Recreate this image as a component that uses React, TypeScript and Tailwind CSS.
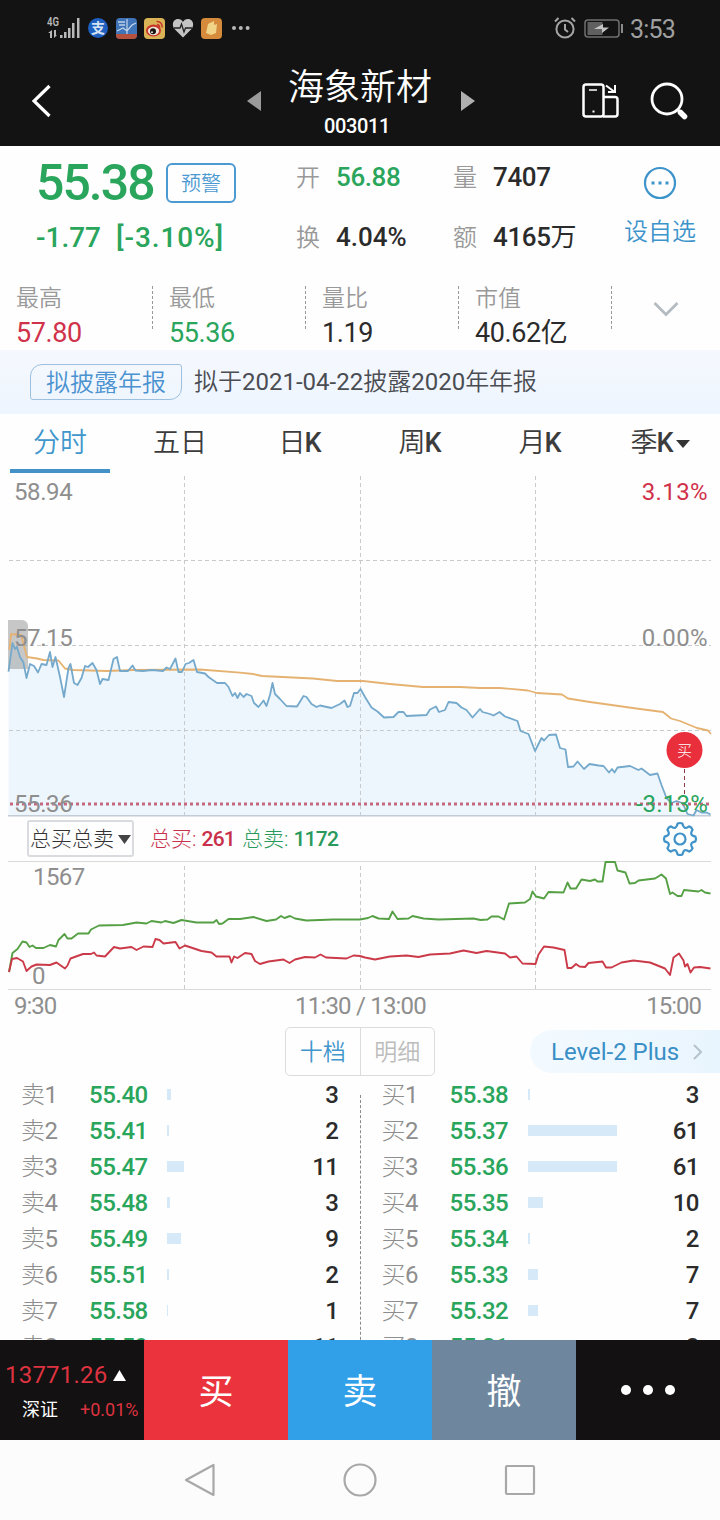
import { FC, ReactNode } from "react";
import clsx from "clsx";

//data
const stats = [
  { label: "最高", value: "57.80", color: "text-[#d0324a]" },
  { label: "最低", value: "55.36", color: "text-[#2aa55c]" },
  { label: "量比", value: "1.19", color: "text-[#2b2b2b]" },
  { label: "市值", value: "40.62亿", color: "text-[#2b2b2b]" },
];

const tabs = ["分时", "五日", "日K", "周K", "月K", "季K"];

interface Level {
  label: string;
  price: string;
  bar: number;
  amount: number;
}

const sells: Level[] = [
  { label: "卖1", price: "55.40", bar: 4, amount: 3 },
  { label: "卖2", price: "55.41", bar: 2, amount: 2 },
  { label: "卖3", price: "55.47", bar: 17, amount: 11 },
  { label: "卖4", price: "55.48", bar: 3, amount: 3 },
  { label: "卖5", price: "55.49", bar: 14, amount: 9 },
  { label: "卖6", price: "55.51", bar: 2, amount: 2 },
  { label: "卖7", price: "55.58", bar: 1, amount: 1 },
  { label: "卖8", price: "55.59", bar: 0, amount: 11 },
];

const buys: Level[] = [
  { label: "买1", price: "55.38", bar: 2, amount: 3 },
  { label: "买2", price: "55.37", bar: 89, amount: 61 },
  { label: "买3", price: "55.36", bar: 89, amount: 61 },
  { label: "买4", price: "55.35", bar: 15, amount: 10 },
  { label: "买5", price: "55.34", bar: 2, amount: 2 },
  { label: "买6", price: "55.33", bar: 10, amount: 7 },
  { label: "买7", price: "55.32", bar: 10, amount: 7 },
  { label: "买8", price: "55.31", bar: 0, amount: 2 },
];

const priceLine =
  "8.5,671.7 12.5,643 15,649 17,647 20,657 23.3,662 26.5,678 30,664 34,666 38,672.5 41.5,664 46.5,665 50,652 52.5,667 55.5,657 60,677 64,697 68.5,668 70.5,664 74,683 77.5,685 81.5,678 85,666 88,667 92.5,663 96.5,670 100,684 102.5,679 108.5,680 113.5,659 117,657 120,671 128,671 132.5,665.5 135.5,670.5 143,671 152,670 163,671 166.5,667.5 170,669 175.5,658.5 178.5,672 182,672 185.5,664 189,663 193.5,660 197,672 205,673.5 208.5,677 217,683 225,683 228.5,687 232.5,696 235,693 237.5,698 240,693 243.5,697 246.5,694 251.5,696 254,703 258.5,707 263.5,700.5 266.5,706 270,695 272.5,683 275,694 280,699 286.5,706 297,706.5 303.5,696 306.5,697 311.5,704 316.5,707 320,705.5 331.5,708 340,704 344.5,700.5 347.5,707 350,706 354,693 357.5,693 360.5,689 365,697 371.5,707.5 377.5,711.5 384,717.5 393.5,717 398.5,712 403.5,712 406.5,716 426.5,715 430,709.5 436,706.5 439,712 445,710 448.5,702 456.5,703 461.5,707.5 466.5,710 472.5,717.5 476.5,713 480,709 482.5,712 490,714 493.5,715.5 499.5,712 505,716.5 517.5,721 520.5,731 528.5,734 535,751 541.5,738 544,740.5 549,735 556,734.5 560,748 565.5,749.5 568,767 573.5,766.5 577.5,761.5 584,769 589.5,764 598.5,765.5 603.5,766 609,772.5 612,769 614.5,772.5 617.5,767.5 630,766 638.5,770 641.5,768.5 650,775 657.5,773.5 661.5,785 666.5,798 671.5,803 676.5,801 682.5,803 687.5,814 693.5,815.5 696.5,810 701.5,812.5 706.5,812.5 710.5,814.5";

const averageLine =
  "9.5,650 11,634 21,635 27,657 37,658.5 43.5,660 58.5,660.5 65,668.5 73.5,670 107,671 133,670 200,669.5 240,672.7 253,674 262,676 313,678.5 337,681 363,681 390,684 423,687 460,687 480,688 500,688 528,690.5 537,693 562,694.5 568,698.5 590,702 640,709 663,712 671,718.5 680,721 697,728 708,730.5 711,734";

const sellLine =
  "9,972 12.5,953 17.5,949 22.5,941.5 26.5,942.5 29.5,947 32.5,945.5 36,948 43.5,948 50,945 56,946.5 58.5,940 64.5,934 67.5,938.5 71.5,938.5 78,933.5 88.5,933.5 91,929.5 99,925.5 123,925 136.5,922.5 146.5,923.5 151.5,921 161.5,922.5 165,921 173.5,923 181.5,920 196.5,922.5 213.5,922.5 216.5,920 219,924 222.5,923.5 228.5,919 240,919 253.5,917 266.5,921 276,919.5 281,916 284.5,918 290,916 295,918.5 306.5,920.5 333.5,919.5 360,919.5 368,918 372.5,916 378.5,918.5 389,919 392.5,911.5 397.5,919 408.5,918.5 412.5,916 423.5,918.5 438.5,919.5 473.5,918.5 480.5,920 487.5,919.5 491.5,916.5 498.5,916.5 504,919.5 509,903.5 525,902.5 530,899 532.5,891.5 536,896.5 544,898.5 548.5,892 563.5,892.5 567.5,882.5 570.5,888.5 576,888.5 581.5,879.5 590,881 595,879.5 597.5,881.5 602.5,881.5 605.5,862 615,862 617.5,870.5 625.5,872.5 629.5,883.5 635,883 638.5,880.5 655,878.5 661.5,874.5 666,878.5 670,894 672.5,892.5 677.5,896 681.5,896 684,890 698.5,891.5 701.5,890 705,892.5 710.5,893.5";

const buyLine =
  "9,972 12,959 17,958 23,961.5 26.5,971 31.5,966.5 36.5,964.5 50,965 56.5,962.5 65,968.5 67.5,965.5 70.5,958.5 83,954 91,954 94,952.5 96.5,955.5 105,956.5 114,947 120,948.5 131.5,947 136.5,950 143.5,946.5 152.5,947 155.5,939 159.5,940 163.5,943.5 175.5,942 179.5,948.5 185,945.5 201.5,951 211.5,952.5 216.5,956.5 229.5,956.5 231.5,962.5 234,956.5 237.5,958 245,953 251.5,954 255,961 260,964 268.5,961.5 283.5,959.5 289.5,963 295,959.5 305,957 315,957.5 320.5,954.5 326,957.5 346.5,958.5 353.5,955.5 360,956 365,957.5 375,959.5 390,956.5 406.5,955.5 418.5,957 430,954.5 450,953.5 463.5,950.5 476.5,953 486.5,951 505,953.5 510,957.5 516.5,956.5 522.5,963.5 535.5,964 538.5,954.5 544,946.5 553.5,947.5 564.5,950 567.5,968 571.5,968 576,964 579.5,966.5 585,967 588.5,963 602.5,961.5 606,967.5 611.5,967.5 621.5,962.5 633.5,960.5 650,962.5 665,968.5 670,975 673.5,957.5 679,953.5 683.5,960.5 685,966.5 687.5,964 690.5,972.5 694,967.5 700,967 710.5,968.5";

// eight teeth, drawn as a wavy ring
const gearPath = Array.from({ length: 8 })
  .map((_, i) => {
    const p = (r: number, deg: number) => {
      const a = ((i * 45 + deg - 90) * Math.PI) / 180;
      return `${(18 + r * Math.cos(a)).toFixed(1)} ${(18 + r * Math.sin(a)).toFixed(1)}`;
    };
    return `${i ? "L" : "M"}${p(15.6, -9)} Q${p(16.6, 0)} ${p(15.6, 9)} L${p(13.6, 13)} Q${p(11.2, 22.5)} ${p(13.6, 32)}`;
  })
  .join(" ");

const StatusBar: FC = () => (
  <div className="flex h-14 items-center pl-[47px] pr-[45px]">
    <svg width="34" height="24" viewBox="0 0 34 24" fill="#b8b8b8">
      <text x="0" y="10" fontSize="12" fontWeight="600" textLength="12" lengthAdjust="spacingAndGlyphs">4G</text>
      <path d="M3 14v8H5v-8L1 17h2zM7 14v8l3-3H9v-5z" />
      <path d="M13 19h2.500v3H13zM17 16h2.500v6H17zM21 12h2.500v10H21zM25 7h2.500v15H25zM30 2h2.500v20H30z" />
    </svg>
    <span className="ml-[7px] flex size-5 items-center justify-center rounded-full bg-[#1e5fc0] text-[14px] font-bold text-[#d6e3f5]">支</span>
    <svg className="ml-2" width="21" height="21" viewBox="0 0 21 21">
      <rect width="21" height="21" rx="4" fill="#3f74b8" />
      <path d="M0 16h21v1a4 4 0 0 1-4 4H4a4 4 0 0 1-4-4z" fill="#b4523f" />
      <path d="M1 13l6-3 4 3 5-6 4-2M11 1v15" stroke="#c5d6ea" strokeWidth="1.2" fill="none" />
      <path d="M2 4h7M3 7h6" stroke="#9db9dc" strokeWidth="2" />
    </svg>
    <svg className="ml-[7px]" width="21" height="21" viewBox="0 0 21 21">
      <rect width="21" height="21" rx="4" fill="#d9b355" />
      <ellipse cx="9.5" cy="12.5" rx="7.5" ry="6" fill="#c8352b" />
      <ellipse cx="9.5" cy="13" rx="5.6" ry="4.2" fill="#f1e6d6" />
      <circle cx="9" cy="13.3" r="3" fill="#1b1412" />
      <circle cx="8" cy="14.2" r=".9" fill="#fff" />
      <path d="M12.500 3.500a5 5 0 0 1 5.500 6M13 6.500a2.500 2.500 0 0 1 2.500 3" stroke="#c8352b" strokeWidth="1.500" fill="none" />
    </svg>
    <svg className="ml-[7px]" width="22" height="20" viewBox="0 0 22 20">
      <path d="M11 19.500L2.500 11C-1 6.500 1.500 1 6 1c2.500 0 4 1.200 5 3 1-1.800 2.500-3 5-3 4.500 0 7 5.500 3.500 10z" fill="#c4c4c4" />
      <path d="M2 10h6l1.500-4L12 14l1.500-4H20" stroke="#222" strokeWidth="1.300" fill="none" />
    </svg>
    <svg className="ml-[7px]" width="21" height="21" viewBox="0 0 21 21">
      <rect width="21" height="21" rx="4" fill="#d58a3c" />
      <path d="M7 6l6-3v4l3-1-1 9-5 2-5-2z" fill="#f2d489" />
    </svg>
    <svg className="ml-2.5" width="18" height="4" fill="#b8b8b8">
      <circle cx="2" cy="2" r="2" />
      <circle cx="8.800" cy="2" r="2" />
      <circle cx="15.600" cy="2" r="2" />
    </svg>
    <svg className="ml-auto" width="22" height="22" viewBox="0 0 22 22" fill="none" stroke="#a5a5a5" strokeWidth="2">
      <circle cx="11" cy="12" r="8.600" />
      <path d="M11 7v5.500l3 2.500M1 4.500L4.500 1M21 4.500L17.500 1" />
    </svg>
    <svg className="ml-2" width="39" height="19" viewBox="0 0 39 19">
      <rect x="1" y="1" width="34" height="17" rx="3" fill="none" stroke="#707070" strokeWidth="1.500" />
      <rect x="3.500" y="3" width="15" height="13" fill="#606060" />
      <path d="M10 10l9-5v3.500h6L18 14v-4z" fill="#c4c4c4" />
      <path d="M38 5v9" stroke="#8a8a8a" strokeWidth="2" />
    </svg>
    <span className="ml-[7px] mt-0.5 text-[25px] leading-none tracking-[-0.8px] text-[#a0a0a0]">3:53</span>
  </div>
);

const Header: FC = () => (
  <div className="flex h-[90px] justify-between px-8">
    <svg className="mt-7 h-[34px] w-[110px]" viewBox="0 0 110 34" fill="none">
      <path d="M17.500 2L2 17l15.500 15" stroke="#fff" strokeWidth="3.200" />
    </svg>
    <div className="flex w-[228px] justify-between">
      <svg className="mt-[35px]" width="14" height="20" fill="#9a9a9a">
        <path d="M14 0v20L0 10z" />
      </svg>
      <div className="flex flex-col items-center pr-0.5 text-white">
        <h1 className="mt-3 h-10 text-[36px] font-[350] leading-10">海象新材</h1>
        <p className="mr-1.5 mt-[7px] text-[20px] font-medium leading-[22px] tracking-[-0.4px]">003011</p>
      </div>
      <svg className="mt-[35px]" width="14" height="20" fill="#b0b0b0">
        <path d="M0 0v20l14-10z" />
      </svg>
    </div>
    <div className="flex gap-[30px] pt-[26px]">
      <svg width="40" height="38" viewBox="0 0 40 38" fill="none" stroke="#fff" strokeWidth="2.500">
        <rect x="3.500" y="2.500" width="20" height="32" rx="2.500" />
        <path d="M24 15h11a2.500 2.500 0 0 1 2.500 2.500V32a2.500 2.500 0 0 1-2.500 2.500H23" />
        <path d="M9 8h8" strokeWidth="1.500" />
        <path d="M26 3.500l8 6M35 3v7h-7" strokeWidth="2" />
        <path d="M12.500 29.500h2" strokeWidth="2" />
      </svg>
      <svg width="38" height="38" viewBox="0 0 38 38" fill="none" stroke="#fff">
        <circle cx="17" cy="17" r="15" strokeWidth="2.800" />
        <path d="M28 28l2 2" strokeWidth="3" />
        <path d="M30.500 30.500l4 4" strokeWidth="5.500" strokeLinecap="round" />
      </svg>
    </div>
  </div>
);

interface PairProps {
  label: string;
  value: ReactNode;
  color?: string;
}

const Pair: FC<PairProps> = ({ label, value, color = "text-[#2b2b2b]" }) => (
  <div className="flex items-center whitespace-nowrap">
    <span className="w-10 pt-0.5 text-[24px] font-[350] text-[#999]">{label}</span>
    <span className={clsx("text-[26px] font-medium tracking-[-0.4px]", color)}>{value}</span>
  </div>
);

const Quote: FC = () => (
  <div className="h-[204px] bg-[#fefefe]">
    <div className="flex h-[130px]">
      <div className="w-[296px] pl-9 pt-2 text-[#2aa55c]">
        <div className="flex h-[58px] items-center">
          <span className="w-[130px] text-[50px] font-medium leading-none tracking-[-2px]">55.38</span>
          <button className="h-10 w-[70px] rounded-md border-2 border-[#4c9ad2] pt-0.5 text-[20px] font-[350] leading-[34px] text-[#4c9ad2]">预警</button>
        </div>
        <div className="flex h-[50px] items-center gap-[15px] pt-0.5 text-[28px] font-medium">
          <span>-1.77</span>
          <span className="tracking-[0.9px]">[-3.10%]</span>
        </div>
      </div>
      <div className="grid w-[157px] grid-rows-[58px_62px] pt-0.5">
        <Pair label="开" value="56.88" color="text-[#2aa55c]" />
        <Pair label="换" value={<span className="tracking-normal">4.04%</span>} />
      </div>
      <div className="grid w-[147px] grid-rows-[58px_62px] pt-0.5">
        <Pair label="量" value="7407" />
        <Pair
          label="额"
          value={
            <>
              4165<span className="font-normal">万</span>
            </>
          }
        />
      </div>
      <div className="flex flex-1 flex-col items-center pt-5 text-[#3d94cb]">
        <svg width="34" height="34" viewBox="0 0 34 34">
          <circle cx="17" cy="17" r="15" fill="none" stroke="currentColor" strokeWidth="2.200" />
          <path d="M8.500 15.500h3v3h-3zM15.500 15.500h3v3h-3zM22.500 15.500h3v3h-3z" fill="currentColor" />
        </svg>
        <span className="mt-[13px] text-[24px] font-[350] leading-[38px]">设自选</span>
      </div>
    </div>
    <div className="flex h-[74px]">
      {stats.map((item) => (
        <div key={item.label} className="flex w-[153px] pl-4">
          <div className="flex-1 whitespace-nowrap">
            <p className="mt-1.5 text-[23px] font-[350] leading-[34px] text-[#999]">{item.label}</p>
            <p className={clsx("text-[27px] leading-[34px] tracking-[-0.4px]", item.color)}>{item.value}</p>
          </div>
          <div className="mt-2.5 h-[43px] border-l border-dashed border-[#999]" />
        </div>
      ))}
      <svg className="ml-[41px] mt-[25px]" width="26" height="17" fill="none" stroke="#b4bcc2" strokeWidth="2.800">
        <path d="M1.500 2L13 13.500 24.500 2" />
      </svg>
    </div>
  </div>
);

const Notice: FC = () => (
  <div className="flex h-16 items-center bg-gradient-to-b from-[#f6f8fe] to-[#edf5fe] pl-[30px]">
    <span className="-mt-px h-9 w-[152px] rounded-[3px] rounded-br-[12px] rounded-tl-[12px] border border-[#9cc0de] pt-px text-center text-[24px] font-[350] leading-[34px] text-[#4b92d0]">
      拟披露年报
    </span>
    <span className="ml-3 text-[24px] text-[#4a4d52]">
      <span className="font-[350]">拟于</span>2021-04-22<span className="font-[350]">披露</span>2020<span className="font-[350]">年年报</span>
    </span>
  </div>
);

const Tabs: FC = () => (
  <div className="grid h-[59px] grid-cols-6 bg-[#fefefe] text-[27px] text-[#3c3c3c]">
    {tabs.map((tab, index) => (
      <button key={tab} className={clsx("flex flex-col items-center", index === 0 && "text-[#3f97cc]")}>
        <span className="flex h-[55px] items-center pt-1 font-[350]">
          {tab.replace("K", "")}
          {tab.endsWith("K") && <span className="-ml-px font-medium">K</span>}
          {index === 5 && (
            <svg className="ml-0.5" width="14" height="8" fill="#333">
              <path d="M0 0h14L7 8z" />
            </svg>
          )}
        </span>
        {index === 0 && <span className="h-1 w-[100px] bg-[#4393c9]" />}
      </button>
    ))}
  </div>
);

const PriceChart: FC = () => (
  <svg className="block" width="720" height="347" viewBox="0 473 720 347">
    <polygon points={`${priceLine} 710.5,815 8.5,815`} fill="#edf6fd" />
    <g stroke="#c8cbce" strokeDasharray="4 3">
      <path d="M184.500 476V815M360.500 476V815M535.500 476V815" />
      <path d="M9 560.500H711M9 645.500H711M9 730.500H711" />
    </g>
    <path d="M8 815.700H711" stroke="#c3ccd6" strokeWidth="1.500" />
    <path d="M8 620h14a6 6 0 0 1 6 6v43H8z" fill="#8f8f8f" fillOpacity=".5" />
    <polyline points={averageLine} fill="none" stroke="#e5b271" strokeWidth="1.800" strokeLinejoin="round" />
    <polyline points={priceLine} fill="none" stroke="#74a9cb" strokeWidth="1.800" strokeLinejoin="round" />
    <path d="M10 804H711" stroke="#c4697d" strokeWidth="3" strokeDasharray="3 3" />
    <g fill="#8e8e8e" fontSize="24" letterSpacing="-0.400">
      <text x="14" y="499.500">58.94</text>
      <text x="14" y="646">57.15</text>
      <text x="14" y="811.500">55.36</text>
      <text x="708" y="646" textAnchor="end" letterSpacing="0.400">0.00%</text>
      <text x="708" y="499.500" textAnchor="end" letterSpacing="0.400" fill="#d0324a">3.13%</text>
      <text x="708" y="811.500" textAnchor="end" letterSpacing="0.200" fill="#2aa55c">-3.13%</text>
    </g>
    <path d="M684.500 769V796" stroke="#8d3a44" strokeDasharray="4 3" />
    <circle cx="684.500" cy="750" r="18" fill="#e92f3b" />
    <text x="684.500" y="756" textAnchor="middle" fill="#fff" fontSize="15" fontWeight="300">买</text>
  </svg>
);

const Toolbar: FC = () => (
  <div className="flex h-[41px] items-center bg-[#fefefe] pb-1 pl-[27px] pr-[22px]">
    <button className="flex h-[37px] w-[107px] items-center gap-1 rounded-[3px] border-2 border-[#d9dbdf] pl-px pt-0.5 text-[21px] font-light text-[#333]">
      总买总卖
      <svg width="13" height="9" fill="#444" className="shrink-0">
        <path d="M0 0h13L6.500 9z" />
      </svg>
    </button>
    <span className="ml-4 pt-[3px] text-[21px] font-light text-[#c9304c]">
      总买: <b className="font-medium tracking-[-0.8px]">261</b>
    </span>
    <span className="ml-[7px] pt-[3px] text-[21px] font-light text-[#2a9a5c]">
      总卖: <b className="font-medium tracking-[-0.8px]">1172</b>
    </span>
    <svg className="ml-auto" width="36" height="36" viewBox="0 0 36 36" fill="none" stroke="#3f93c8" strokeWidth="2.200">
      <path d={`${gearPath} Z`} strokeLinejoin="round" />
      <circle cx="18" cy="18" r="5.500" />
    </svg>
  </div>
);

const VolumeChart: FC = () => (
  <svg className="block" width="720" height="165" viewBox="0 861 720 165">
    <path d="M8 861.500H711M8 989.500H711" stroke="#dadada" />
    <path d="M184.500 866V989M360.500 866V989M535.500 866V989" stroke="#c8cbce" strokeDasharray="4 3" />
    <g fill="#8e8e8e" fontSize="24" letterSpacing="-0.600">
      <text x="33" y="885">1567</text>
      <text x="32" y="984">0</text>
      <text x="14" y="1014" letterSpacing="-1">9:30</text>
      <text x="360.500" y="1014" textAnchor="middle" letterSpacing="-0.800">11:30 / 13:00</text>
      <text x="701" y="1014" textAnchor="end" letterSpacing="-1">15:00</text>
    </g>
    <g fill="none" strokeWidth="1.900" strokeLinejoin="round">
      <polyline points={sellLine} stroke="#55a045" />
      <polyline points={buyLine} stroke="#cb3a48" />
    </g>
  </svg>
);

const Levels: FC<{ levels: Level[] }> = ({ levels }) => (
  <div className="flex-1">
    {levels.map((item) => (
      <div key={item.label} className="flex h-9 items-center px-[21px] text-[24px] tracking-[-0.5px]">
        <span className="w-[68px] text-[#8e8e8e]">
          <span className="font-light">{item.label[0]}</span>
          {item.label.slice(1)}
        </span>
        <span className="w-[78px] font-medium text-[#2aa55c]">{item.price}</span>
        <span className="mb-0.5 h-[11px] bg-[#d5e9f8]" style={{ width: item.bar }} />
        <span className="ml-auto font-medium text-[#2b2b2b]">{item.amount}</span>
      </div>
    ))}
  </div>
);

const Depth: FC = () => (
  <div className="h-[314px] overflow-hidden bg-[#fefefe]">
    <div className="flex items-start">
      <div className="ml-[285px] mt-px flex h-[49px] w-[150px] rounded-[5px] border border-[#dcdcdc] text-[23px] font-[350]">
        <button className="flex-1 pt-1 text-[#3f97cc]">十档</button>
        <button className="flex-1 border-l border-[#dcdcdc] pt-1 text-[#bcbcbc]">明细</button>
      </div>
      <div className="ml-auto mt-1 flex h-[43px] w-[190px] items-center rounded-l-full bg-gradient-to-r from-[#f3faff] to-[#e9f5fe] pl-[21px] text-[24px] text-[#3a8fc6]">
        <span className="w-[142px] whitespace-nowrap">Level-2 Plus</span>
        <svg width="9" height="16" fill="none" stroke="#b5c3cd" strokeWidth="2">
          <path d="M1 1l7 7-7 7" />
        </svg>
      </div>
    </div>
    <div className="mt-px flex">
      <Levels levels={sells} />
      <div className="mt-[18px] w-px border-l border-dashed border-[#8a8a8a]" />
      <Levels levels={buys} />
    </div>
  </div>
);

const BottomBar: FC = () => (
  <div className="grid h-[100px] grid-cols-5 bg-[#131111] text-[35px] text-white">
    <div className="pl-[5px] pt-5 text-[#dd3340]">
      <div className="flex items-center gap-1.5 text-[24px] leading-[30px]">
        <span className="tracking-[0.2px]">13771.26</span>
        <svg width="13" height="11" fill="#fff">
          <path d="M6.500 0L13 11H0z" />
        </svg>
      </div>
      <div className="mt-1.5 flex items-center whitespace-nowrap pl-[17px] text-[18px] leading-7">
        <span className="w-[58px] text-white">深证</span>
        <span className="text-[18px]">+0.01%</span>
      </div>
    </div>
    <button className="bg-[#ea333d] pt-1.5">买</button>
    <button className="bg-[#32a0e9] pt-1.5">卖</button>
    <button className="bg-[#6f879e] pt-1.5">撤</button>
    <button className="flex items-center justify-center gap-3">
      <span className="size-2.5 rounded-full bg-white" />
      <span className="size-2.5 rounded-full bg-white" />
      <span className="size-2.5 rounded-full bg-white" />
    </button>
  </div>
);

const NavBar: FC = () => (
  <div className="flex h-20 items-center justify-center gap-[126px] bg-[#fcfcfc]">
    <svg width="34" height="34" viewBox="0 0 34 34" fill="none" stroke="#a8a8a8" strokeWidth="2.200" strokeLinejoin="round">
      <path d="M30.500 2v30L3 17z" />
    </svg>
    <svg width="34" height="34" fill="none" stroke="#a8a8a8" strokeWidth="2.200">
      <circle cx="17" cy="17" r="15.500" />
    </svg>
    <svg width="34" height="34" fill="none" stroke="#a8a8a8" strokeWidth="2.200">
      <rect x="3" y="3" width="28" height="28" rx="1" />
    </svg>
  </div>
);

const App: FC = () => {
  return (
    <div className="h-[1520px] w-[720px] overflow-hidden bg-[#fefefe] font-['Roboto','Noto_Sans_CJK_SC',sans-serif]">
      <div className="bg-[#131313]">
        <StatusBar />
        <Header />
      </div>
      <Quote />
      <Notice />
      <Tabs />
      <PriceChart />
      <Toolbar />
      <VolumeChart />
      <Depth />
      <BottomBar />
      <NavBar />
    </div>
  );
};
export default App;
